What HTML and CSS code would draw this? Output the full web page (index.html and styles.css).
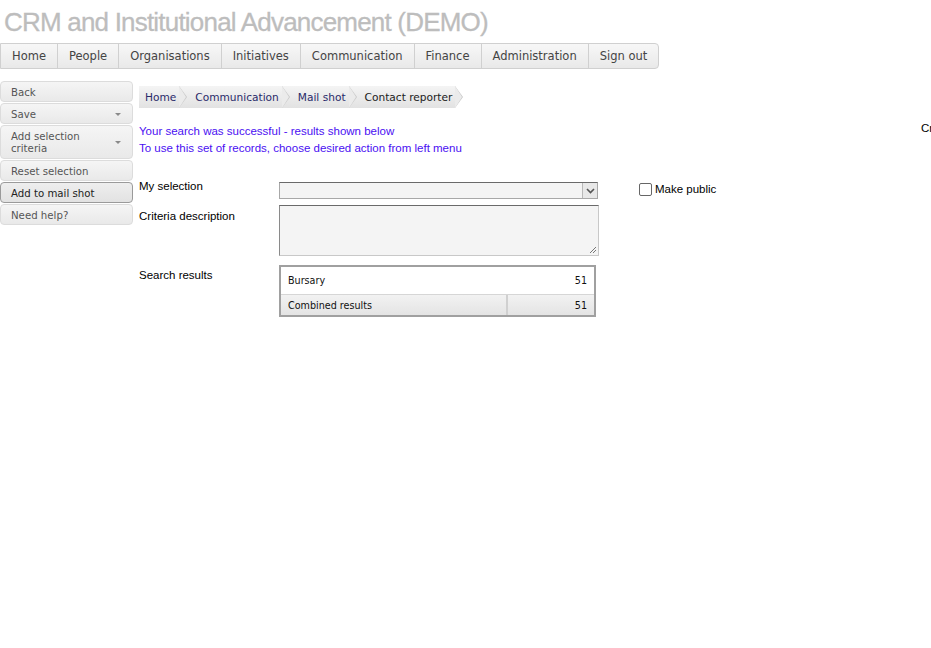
FILE: index.html
```html
<!DOCTYPE html>
<html>
<head>
<meta charset="utf-8">
<title>CRM and Institutional Advancement (DEMO)</title>
<link rel="stylesheet" href="styles.css">
</head>
<body>
<div class="page">
  <h1 class="title">CRM and Institutional Advancement (DEMO)</h1>
  <nav class="topnav">
    <a class="nav-item">Home</a>
    <a class="nav-item">People</a>
    <a class="nav-item">Organisations</a>
    <a class="nav-item">Initiatives</a>
    <a class="nav-item">Communication</a>
    <a class="nav-item">Finance</a>
    <a class="nav-item">Administration</a>
    <a class="nav-item last">Sign out</a>
  </nav>
  <div class="layout">
    <aside class="sidemenu">
      <div class="side-btn">Back</div>
      <div class="side-btn has-arrow">Save</div>
      <div class="side-btn has-arrow two-line">Add selection<br>criteria</div>
      <div class="side-btn">Reset selection</div>
      <div class="side-btn active">Add to mail shot</div>
      <div class="side-btn">Need help?</div>
    </aside>
    <main class="main">
      <div class="crumbs">
        <span class="crumb">Home</span>
        <span class="crumb">Communication</span>
        <span class="crumb">Mail shot</span>
        <span class="crumb current">Contact reporter</span>
      </div>
      <div class="messages">
        <div>Your search was successful - results shown below</div>
        <div>To use this set of records, choose desired action from left menu</div>
      </div>
      <div class="form">
        <div class="form-row row-select">
          <label class="lbl">My selection</label>
          <div class="select">
            <span class="select-btn"><svg width="9" height="6" viewBox="0 0 9 6"><path d="M1 1 L4.5 4.5 L8 1" fill="none" stroke="#555" stroke-width="1.6"/></svg></span>
          </div>
          <label class="public"><span class="checkbox"></span>Make public</label>
        </div>
        <div class="form-row row-text">
          <label class="lbl">Criteria description</label>
          <div class="textarea">
            <svg class="grip" width="9" height="9" viewBox="0 0 9 9"><path d="M8 2 L2 8 M8 5 L5 8" stroke="#777" stroke-width="1"/></svg>
          </div>
        </div>
        <div class="form-row row-results">
          <label class="lbl">Search results</label>
          <table class="results">
            <tr class="r-row"><td>Bursary</td><td class="num">51</td></tr>
            <tr class="r-total"><td>Combined results</td><td class="num">51</td></tr>
          </table>
        </div>
      </div>
    </main>
    <div class="side-right">Criteria</div>
  </div>
</div>
</body>
</html>
```
FILE: styles.css
```css
html, body {
  margin: 0;
  padding: 0;
  background: #fff;
  overflow: hidden;
}
.page {
  width: 931px;
  height: 648px;
  overflow: hidden;
  font-family: "Liberation Sans", Arial, sans-serif;
  font-size: 11.5px;
  color: #000;
}
.title {
  margin: 0;
  padding: 5px 0 0 4px;
  height: 38px;
  box-sizing: border-box;
  font-family: "Liberation Sans", Arial, sans-serif;
  font-weight: normal;
  font-size: 26px;
  letter-spacing: -0.8px;
  line-height: 34px;
  color: #bdbdbd;
  -webkit-text-stroke: 0.3px #bdbdbd;
  white-space: nowrap;
}
.topnav {
  display: flex;
  width: max-content;
  margin-top: 5px;
  height: 26px;
  box-sizing: border-box;
  border: 1px solid #d0d0d0;
  border-radius: 0 4px 4px 0;
  background: linear-gradient(#f7f7f7, #e9e9e9);
}
.nav-item {
  display: block;
  font-family: "DejaVu Sans", Verdana, sans-serif;
  font-size: 11.5px;
  color: #444;
  line-height: 24px;
  padding: 0 11px;
  border-right: 1px solid #d0d0d0;
  white-space: nowrap;
}
.nav-item.last { border-right: 0; padding-right: 11px; }
.layout {
  display: flex;
  margin-top: 12px;
}
.sidemenu {
  width: 133px;
  flex: none;
  display: flex;
  flex-direction: column;
  gap: 1px;
}
.side-btn {
  position: relative;
  box-sizing: border-box;
  min-height: 21px;
  padding: 5px 24px 2px 10px;
  font-family: "DejaVu Sans", Verdana, sans-serif;
  font-size: 10.2px;
  line-height: 12px;
  color: #555;
  border: 1px solid #dcdcdc;
  border-radius: 4px;
  background: linear-gradient(#f5f5f5, #e9e9e9);
}
.side-btn.two-line { min-height: 34px; padding-top: 5px; }
.side-btn.active {
  color: #222;
  border-color: #9a9a9a;
  background: linear-gradient(#eeeeee, #e2e2e2);
}
.side-btn.has-arrow::after {
  content: "";
  position: absolute;
  right: 11px;
  top: 50%;
  margin-top: -1px;
  border-left: 3px solid transparent;
  border-right: 3px solid transparent;
  border-top: 3px solid #8a8a8a;
}
.main {
  flex: none;
  width: 782px;
  margin-left: 6px;
  padding-top: 5px;
}
.side-right {
  flex: none;
  padding-top: 41px;
  white-space: nowrap;
}
.crumbs {
  display: flex;
  height: 22px;
  width: max-content;
}
.crumb {
  position: relative;
  display: block;
  height: 22px;
  line-height: 22px;
  font-family: "DejaVu Sans", Verdana, sans-serif;
  font-size: 10.6px;
  color: #2a2a6a;
  padding: 0 3px 0 16px;
  background: linear-gradient(#f4f4f4, #e2e2e2);
}
.crumb:first-child { padding-left: 6px; }
.crumb.current { color: #222; }
.crumb::after {
  content: "";
  position: absolute;
  right: -8px;
  top: 0;
  width: 0;
  height: 0;
  border-top: 11px solid transparent;
  border-bottom: 11px solid transparent;
  border-left: 8px solid #c8c8c8;
  z-index: 2;
}
.crumb::before {
  content: "";
  position: absolute;
  right: -7px;
  top: 0;
  width: 0;
  height: 0;
  border-top: 11px solid transparent;
  border-bottom: 11px solid transparent;
  border-left: 7px solid #ebebeb;
  z-index: 3;
}
.messages {
  margin-top: 15px;
  color: #4a0ff2;
  line-height: 17px;
}
.form {
  margin-top: 25px;
}
.form-row {
  display: flex;
  align-items: flex-start;
}
.lbl {
  width: 140px;
  flex: none;
  line-height: 14px;
}
.row-select .lbl { margin-top: -3px; }
.select {
  position: relative;
  width: 319px;
  height: 17px;
  box-sizing: border-box;
  border: 1px solid #a8a8a8;
  border-top-color: #6a6a6a;
  background: #f4f4f4;
}
.select-btn {
  position: absolute;
  right: 0;
  top: 0;
  width: 15px;
  height: 15px;
  box-sizing: border-box;
  border-left: 1px solid #b8b8b8;
  background: #e8e8e8;
  display: flex;
  align-items: center;
  justify-content: center;
}
.public {
  display: flex;
  align-items: center;
  margin-left: 41px;
  line-height: 14px;
}
.checkbox {
  width: 11px;
  height: 11px;
  border: 1px solid #666;
  border-radius: 2px;
  background: #fff;
  margin-right: 3px;
}
.row-text { margin-top: 6px; }
.row-text .lbl { margin-top: 4px; }
.textarea {
  position: relative;
  width: 320px;
  height: 51px;
  box-sizing: border-box;
  border: 1px solid #c8c8c8;
  border-top-color: #6a6a6a;
  border-left-color: #8a8a8a;
  background: #f4f4f4;
}
.grip {
  position: absolute;
  right: 1px;
  bottom: 1px;
}
.row-results { margin-top: 9px; }
.row-results .lbl { margin-top: 3px; }
.results {
  width: 317px;
  border: 2px solid #a0a0a0;
  border-spacing: 0;
  font-family: "DejaVu Sans", Verdana, sans-serif;
  font-size: 9.6px;
  color: #111;
}
.results td {
  padding: 0 7px;
}
.r-row td {
  height: 27px;
  background: #fff;
  border-bottom: 1px solid #d6d6d6;
}
.r-total td {
  height: 20px;
  background: linear-gradient(#f2f2f2, #e4e4e4);
}
.r-total td:first-child { border-right: 2px solid #d0d0d0; }
.results .num { text-align: right; width: 72px; }
```
